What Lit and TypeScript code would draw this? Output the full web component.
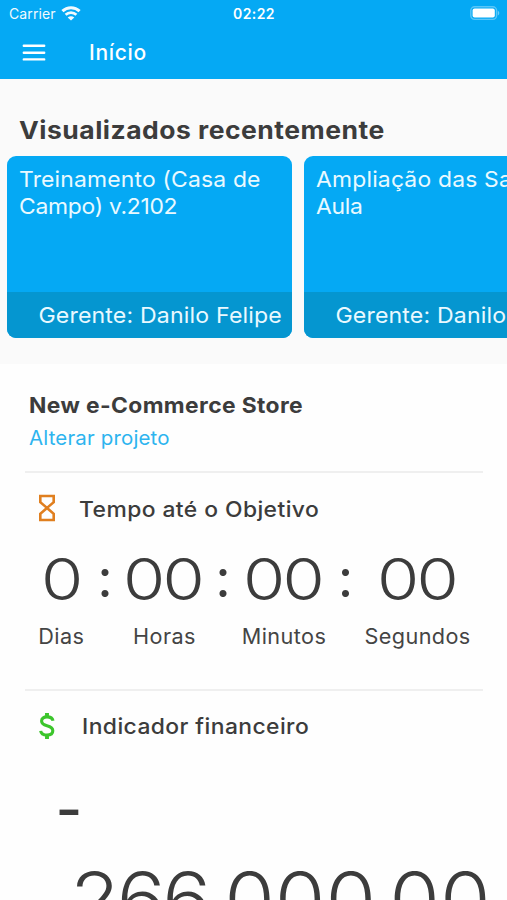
import { LitElement, html, css, svg } from "lit";
import { customElement, property } from "lit/decorators.js";

const wifiIcon = html`<svg class="wifi" width="20" height="15" viewBox="0 0 20 15" fill="none">
  <path d="M1.4 5.2 C6.2 0.6 13.8 0.6 18.6 5.2" stroke="#fff" stroke-width="3" />
  <path d="M4.6 8.8 C7.7 5.9 12.3 5.9 15.4 8.8" stroke="#fff" stroke-width="2.7" />
  <path d="M10 14.6 L6.7 11.4 C8.5 9.7 11.5 9.7 13.3 11.4 Z" fill="#fff" />
</svg>`;

const batteryIcon = html`<svg width="30" height="15" viewBox="0 0 30 15" fill="none">
  <rect x="0.8" y="0.8" width="25.8" height="12.6" rx="3.8" stroke="#fff" stroke-opacity=".34" stroke-width="1.4" />
  <rect x="2.6" y="2.6" width="22.2" height="9" rx="2" fill="#fff" />
  <path d="M27.9 4.8 C29.8 5.6 29.8 8.6 27.9 9.4 Z" fill="#fff" fill-opacity=".42" />
</svg>`;

const hourglassIcon = svg`<svg width="18" height="28" viewBox="0 0 18 28" fill="none" stroke="#e07f1f" stroke-width="2.6">
  <path d="M2.3 2 H15.7 V8.2 L9 13.9 L2.3 8.2 Z" />
  <path d="M2.3 26 H15.7 V19.8 L9 13.9 L2.3 19.8 Z" />
</svg>`;

const dollarIcon = svg`<svg width="18" height="28" viewBox="0 0 18 28" fill="none" stroke="#3cc52c" stroke-width="3.1">
  <path d="M15 8.8 C14.6 6.3 12.4 4.9 9 4.9 C5.6 4.9 3.6 6.4 3.6 9 C3.6 11.7 5.7 12.9 9 13.7 C12.6 14.6 14.8 15.8 14.8 18.7 C14.8 21.5 12.5 23 9 23 C5.3 23 3 21.5 2.7 18.8" />
  <path d="M9 1 V5.5 M9 22.5 V27" stroke-width="3.9" />
</svg>`;

@customElement("status-bar")
export class StatusBar extends LitElement {
  static styles = css`
    :host { display: grid; grid-template-columns: 1fr auto 1fr; height: 27px; align-items: center;
      padding: 0 7px 0 9px; color: #fff; font-size: 14px; box-sizing: border-box; }
    .carrier { display: flex; align-items: center; gap: 5px; letter-spacing: 0.1px; opacity: .95; }
    .wifi { margin-bottom: 1px; }
    .time { font-weight: 600; letter-spacing: 0.4px; margin-right: 1px; }
    .battery { display: flex; justify-content: flex-end; }
  `;
  render() {
    return html`<div class="carrier"><span>Carrier</span>${wifiIcon}</div>
      <div class="time">02:22</div>
      <div class="battery">${batteryIcon}</div>`;
  }
}

@customElement("project-card")
export class ProjectCard extends LitElement {
  @property({ attribute: false }) lines: string[] = [];
  @property() manager = "";
  static styles = css`
    :host { display: flex; flex-direction: column; flex: none; width: 285px; height: 182px; border-radius: 9px;
      overflow: hidden; background: #05a9f4; color: #e9f9ff; font-size: 22px; font-weight: 370; box-sizing: border-box; }
    .name { flex: 1; padding: 10px 0 0 12px; line-height: 27px; white-space: nowrap; }
    .line { transform: scaleX(1.04); transform-origin: left; letter-spacing: 0.18px; }
    .line + .line { letter-spacing: -0.27px; }
    .manager { height: 46px; line-height: 47px; background: #0596d0; }
    .manager-name { margin-right: 10px; text-align: right; letter-spacing: 0.16px; white-space: nowrap;
      transform: scaleX(1.05); transform-origin: right; }
  `;
  render() {
    return html`<div class="name">${this.lines.map((l) => html`<div class="line">${l}</div>`)}</div>
      <div class="manager"><div class="manager-name">Gerente: ${this.manager}</div></div>`;
  }
}

@customElement("count-down")
export class CountDown extends LitElement {
  static styles = css`
    :host { display: grid; grid-template-columns: 66px 21px 97px 21px 101px 22px 122px; padding-left: 28.5px;
      justify-items: center; }
    .digits { height: 78px; line-height: 72px; font-size: 58px; font-weight: 340; letter-spacing: -2.3px;
      margin-left: -2px; transform: scaleX(1.18); }
    .colon { height: 78px; line-height: 66px; font-family: Lato, sans-serif; font-size: 56px; }
    .unit { height: 30px; line-height: 31px; font-size: 21px; font-weight: 370; letter-spacing: 0.4px; color: #444;
      transform: scaleX(1.03); }
  `;
  render() {
    const parts = [["0", "Dias"], ["00", "Horas"], ["00", "Minutos"], ["00", "Segundos"]];
    return html`
      ${parts.map(([n], i) => html`${i ? html`<div class="colon">:</div>` : ""}<div class="digits">${n}</div>`)}
      ${parts.map(([, u], i) => html`${i ? html`<div></div>` : ""}<div class="unit">${u}</div>`)}
    `;
  }
}

@customElement("app-root")
export class AppRoot extends LitElement {
  static styles = css`
    :host { display: block; width: 507px; height: 900px; overflow: hidden; background: #fefefe; color: #3c3c3c;
      font-family: Inter, "Open Sans", sans-serif; }
    .top { background: #05a9f4; height: 79px; }
    .bar { display: flex; align-items: center; height: 51px; padding-left: 22px; color: #fff; }
    .title { margin-left: 43px; font-size: 21px; font-weight: 450; letter-spacing: 0.7px; }
    .recent { height: 285px; background: #fafafa; overflow: hidden; }
    .recent-title { margin: 0; padding: 35px 0 0 19px; height: 42px; line-height: 32px; font-size: 24.5px;
      font-weight: 700; letter-spacing: 0.45px; white-space: nowrap; }
    .recent-title span { display: inline-block; transform: scaleX(1.082); transform-origin: left; }
    .cards { display: flex; gap: 12px; padding-left: 7px; }
    .project { padding: 25px 0 0 29px; height: 82px; }
    .project-name { margin: 0; line-height: 32px; font-size: 21.5px; font-weight: 700; letter-spacing: 0.35px;
      transform: scaleX(1.062); transform-origin: left; }
    .change { margin-top: 1px; line-height: 33px; font-size: 19.5px; letter-spacing: 0.15px; color: #2db4ef;
      transform: scaleX(1.05); transform-origin: left; }
    .divider { height: 2px; margin: 0 24px 0 25px; background: #efefef; }
    .row { display: flex; align-items: center; height: 70px; padding-left: 38px; font-size: 21.5px;
      font-weight: 450; letter-spacing: 0.4px; }
    .row span { transform: scaleX(1.063); transform-origin: left; }
    .goal span { padding-top: 1px; }
    .goal { gap: 23px; }
    .finance { gap: 25.5px; }
    .timer { height: 146px; }
    .minus { height: 96px; padding: 0 0 0 55.5px; line-height: 96px; font-size: 58px; font-weight: 500; }
    .amount { padding-left: 70px; height: 90px; line-height: 85px; font-size: 74px; font-weight: 340;
      letter-spacing: 0.4px; white-space: nowrap; }
    .amount-value { display: inline-block; transform: scaleX(1.1); transform-origin: left; }
    .thousands { letter-spacing: -3px; }
    .separator { letter-spacing: -9px; }
    .separator.first { letter-spacing: -6px; }
  `;
  render() {
    return html`
      <header class="top">
        <status-bar></status-bar>
        <div class="bar">
          <svg width="24" height="18" viewBox="0 0 24 18" stroke="#fff" stroke-width="2.4" stroke-linecap="round">
            <path d="M1.8 1.8 H22.2 M1.8 8.8 H22.2 M1.8 15.4 H22.2" />
          </svg>
          <span class="title">Início</span>
        </div>
      </header>
      <section class="recent">
        <h2 class="recent-title"><span>Visualizados recentemente</span></h2>
        <div class="cards">
          <project-card .lines=${["Treinamento (Casa de", "Campo) v.2102"]} manager="Danilo Felipe"></project-card>
          <project-card .lines=${["Ampliação das Salas de", "Aula"]} manager="Danilo Felipe"></project-card>
        </div>
      </section>
      <section class="project">
        <h3 class="project-name">New e-Commerce Store</h3>
        <div class="change">Alterar projeto</div>
      </section>
      <div class="divider"></div>
      <div class="row goal">${hourglassIcon}<span>Tempo até o Objetivo</span></div>
      <div class="timer"><count-down></count-down></div>
      <div class="divider"></div>
      <div class="row finance">${dollarIcon}<span>Indicador financeiro</span></div>
      <div class="minus">-</div>
      <div class="amount"><span class="amount-value"><span class="thousands">266</span><span class="separator first">.</span>000<span class="separator">,</span>00</span></div>
    `;
  }
}
